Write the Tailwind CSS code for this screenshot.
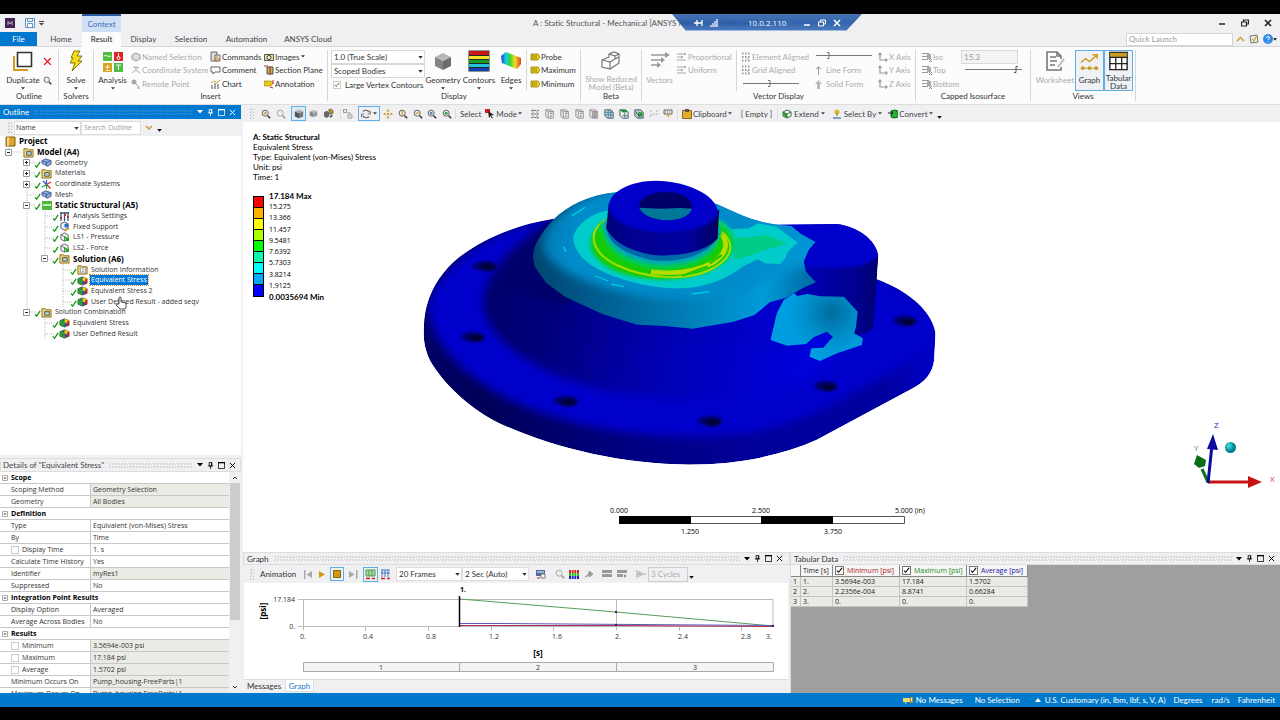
<!DOCTYPE html>
<html lang="en">
<head>
    <meta charset="UTF-8">
    <meta name="viewport" content="width=device-width, initial-scale=1.0">
    <title>A : Static Structural - Mechanical</title>
    <script src="https://cdn.jsdelivr.net/npm/@tailwindcss/browser@4"></script>
    <style>
        body { font-family: Lato, 'Open Sans', sans-serif; }
        .dots {
            background-image: radial-gradient(currentColor 35%, transparent 40%), radial-gradient(currentColor 35%, transparent 40%);
            background-size: 3px 3px;
            background-position: 0 0, 1px 2px;
        }
    </style>
</head>
<body class="flex h-screen flex-col overflow-hidden whitespace-nowrap bg-black text-[8px] leading-[10px] text-[#333]">

    <!-- Shared icons -->
    <svg class="hidden">
        <symbol id="zoom" viewBox="0 0 12 12"><circle cx="5" cy="5" r="3.6" fill="#f2f2f2" stroke="#555" stroke-width="1.1"/><path d="M8 8l3 3" stroke="#333" stroke-width="1.8"/></symbol>
        <symbol id="cube" viewBox="0 0 12 12"><path d="M6 1l5 2-5 2-5-2z" fill="#aaa"/><path d="M1 3l5 2v6L1 9z" fill="#555"/><path d="M11 3L6 5v6l5-2z" fill="#777"/></symbol>
        <symbol id="pick" viewBox="0 0 12 12"><path d="M1 1h6l3 2v8H4L1 9zM1 1l3 2h6M4 3v8" fill="#eee" stroke="#888"/><path d="M6 5h3M7 7v3" stroke="#666"/></symbol>
        <symbol id="part" viewBox="0 0 12 12"><path d="M1 4l4-2 6 2v4l-4 2-4-2-2-1z" fill="#8fa9d6" stroke="#34558f" stroke-width=".9"/><path d="M1 4l5 2 5-2M6 6v4" fill="none" stroke="#34558f" stroke-width=".9"/></symbol>
        <symbol id="folder" viewBox="0 0 12 12"><path d="M1 2h4l1 1h5v8H1z" fill="#efd571" stroke="#8a6b15"/><path d="M4 5h5v4H4z" fill="#b8c8d0" stroke="#4c5a5c"/></symbol>
        <symbol id="result" viewBox="0 0 12 12"><path d="M1 4l5-2 5 2v5l-5 2-5-2z" fill="#2450b8" stroke="#333" stroke-width=".7"/><path d="M1 4l3-1 2 3v5l-5-2z" fill="#2b9b30"/><path d="M6 2l5 2-2 3-3-1z" fill="#efd000"/><path d="M9 5l2-1v5l-3 1z" fill="#d32020"/></symbol>
        <symbol id="load" viewBox="0 0 12 12"><path d="M2 3l4-2 4 2v5l-4 2-4-2z" fill="#e9eef0" stroke="#555" stroke-width=".9"/><path d="M2 3l4 2v5" fill="none" stroke="#555" stroke-width=".8"/><path d="M6 5l4 4m0-3v3H7" stroke="#14a514" stroke-width="1.5" fill="none"/></symbol>
        <symbol id="check" viewBox="0 0 8 8"><path d="M1 5l2 2 4-6" fill="none" stroke="#119911" stroke-width="1.5"/></symbol>
        <symbol id="minus" viewBox="0 0 7 7"><path d="M.5.5h6v6h-6z" fill="#fff" stroke="#999"/><path d="M2 3.500h3" stroke="#222"/></symbol>
        <symbol id="plus" viewBox="0 0 7 7"><path d="M.5.5h6v6h-6z" fill="#fff" stroke="#999"/><path d="M2 3.500h3M3.500 2v3" stroke="#222"/></symbol>
        <symbol id="down" viewBox="0 0 6 4"><path d="M0 0h6L3 3.500z" fill="currentColor"/></symbol>
        <symbol id="pin" viewBox="0 0 8 8"><path d="M2.500.5h3v4h-3zM1 4.500h6M4 5v3" fill="none" stroke="currentColor" stroke-width=".9"/><path d="M4.500.5h1v4h-1z" fill="currentColor"/></symbol>
        <symbol id="max" viewBox="0 0 8 8"><path d="M.5.5h7v7h-7z" fill="none" stroke="currentColor" stroke-width=".9"/><path d="M0 0h8v1.500H0z" fill="currentColor"/></symbol>
        <symbol id="close" viewBox="0 0 8 8"><path d="M1 1l6 6M7 1L1 7" stroke="currentColor" stroke-width="1.100"/></symbol>
        <symbol id="tag" viewBox="0 0 10 8"><path d="M1 1h7l2 3-2 3H1z" fill="#ecd21e" stroke="#8d7b06" stroke-width=".8"/><path d="M2 3h5M2 5h5" stroke="#7a6800" stroke-dasharray="1.500 .6"/></symbol>
        <symbol id="axis" viewBox="0 0 10 10"><path d="M2 1v7h7M.5 3L2 1l1.500 2M7.500 6.500L9 8 7.500 9.500" fill="none" stroke="#999" stroke-width="1.200"/></symbol>
        <symbol id="iso" viewBox="0 0 10 10"><path d="M0 1.500h7M0 4.500h9M0 7.500h6" stroke="#999" stroke-width="1.200"/><path d="M5 2h4v5H5z" fill="#aaa"/><path d="M7 7l3 3m0-3L7 10" stroke="#888"/></symbol>
        <symbol id="vecs" viewBox="0 0 10 8"><path d="M0 1h9M0 4h6M0 7h9M7 0l2 1-2 1M4 3l2 1-2 1" fill="none" stroke="#aaa"/></symbol>
        <symbol id="dotgrid" viewBox="0 0 10 10"><path d="M1 1.500h8M1 5h8M1 8.500h8" stroke="#999" stroke-width="1.800" stroke-dasharray="1.500 1.500"/><path d="M6 6l3 3" stroke="#aaa"/></symbol>
    </svg>

    <!-- Title bar -->
    <header class="relative mt-[14px] flex h-[18px] shrink-0 items-center bg-[#f0f0f2]">
        <svg class="ml-[5px] size-[10px]" viewBox="0 0 10 10"><path d="M0 0h10v10H0z" fill="#432350"/><path d="M3 7V3.500L5 6l2-2.500V7" fill="none" stroke="#d6bfe0" stroke-width=".9"/></svg>
        <button aria-label="Save" class="ml-[10px]"><svg class="size-[10px]" viewBox="0 0 10 10"><path d="M.5.5h9v9h-9zM2.500.5v3h5v-3M2.500 9.500v-4h5v4" fill="#fff" stroke="#5c95c5"/></svg></button>
        <button aria-label="Customize" class="ml-[4px]"><svg class="h-[5px] w-[5px]" viewBox="0 0 5 5"><path d="M0 0h5v1H0zM0 2h5L2.500 4.500z" fill="#444"/></svg></button>
        <div class="ml-[38px] h-full w-[39px] border-t-2 border-[#2a5ca0] bg-[#cfe0f6] pt-[3px] text-center text-[#3c6fc0]">Context</div>
        <h1 class="ml-[412px] text-[#555]">A : Static Structural - Mechanical [ANSYS Mechanical Enterprise]</h1>
        <div class="absolute inset-y-0 right-0 flex items-center gap-[15px] pr-[8px] text-[#222]">
            <button aria-label="Minimize"><svg class="size-[8px]" viewBox="0 0 8 8"><path d="M1 5h6" stroke="currentColor" stroke-width="1.500"/></svg></button>
            <button aria-label="Restore"><svg class="size-[8px]" viewBox="0 0 8 8"><path d="M2.500 3V1h5v4H6M.5 3h5v4h-5z" fill="none" stroke="currentColor" stroke-width="1.200"/></svg></button>
            <button aria-label="Close"><svg class="size-[8px]" viewBox="0 0 8 8"><path d="M1 1l6 6M7 1L1 7" stroke="currentColor" stroke-width="1.700"/></svg></button>
        </div>
        <!-- Remote session bar -->
        <div class="absolute left-[672px] top-0 z-10 h-[17px] w-[190px] text-white">
            <svg class="absolute inset-0 size-full" viewBox="0 0 190 17">
                <defs><linearGradient id="rdp" x2="0" y2="1"><stop stop-color="#3565ad"/><stop offset=".5" stop-color="#1f55a6"/><stop offset="1" stop-color="#3b6db8"/></linearGradient></defs>
                <path d="M0 0h190l-16 17H14z" fill="url(#rdp)" fill-opacity=".9"/><path d="M14 16.500h160" stroke="#9db9df"/>
            </svg>
            <div class="relative flex h-full items-center pl-[21px]">
                <svg class="h-[8px] w-[25px]" viewBox="0 0 25 8"><path d="M1 4h3M4 1v6M4 4h5M9 1v6" fill="none" stroke="#fff" stroke-width="1.300"/><path d="M18 8V6M20 8V4M22 8V2M24 8V0" stroke="#fff" stroke-width="1.200"/></svg>
                <span class="ml-[30px] font-['Open_Sans']">10.0.2.110</span>
                <button aria-label="Minimize session" class="ml-[17px]"><svg class="size-[8px]" viewBox="0 0 8 8"><path d="M1 6h6" stroke="#fff" stroke-width="1.500"/></svg></button>
                <button aria-label="Restore session" class="ml-[7px]"><svg class="size-[8px]" viewBox="0 0 8 8"><path d="M2.500 3V1h5v4H6M.5 3h5v4h-5z" fill="none" stroke="#fff"/></svg></button>
                <button aria-label="Close session" class="ml-[7px]"><svg class="size-[8px]" viewBox="0 0 8 8"><path d="M1 1l6 6M7 1L1 7" stroke="#fff" stroke-width="1.500"/></svg></button>
            </div>
        </div>
    </header>

    <!-- Ribbon tabs -->
    <nav class="flex h-[15px] shrink-0 items-center border-b border-[#d4d4d6] bg-[#f0f0f2] text-[#444]">
        <button class="h-full w-[37px] bg-[#0078ce] text-white">File</button>
        <button class="w-[45px] pl-[3px]">Home</button>
        <button class="h-[15px] w-[39px] bg-[#fcfcfc] text-[#222]">Result</button>
        <button class="w-[45px]">Display</button>
        <button class="w-[50px]">Selection</button>
        <button class="w-[61px]">Automation</button>
        <button class="w-[62px]">ANSYS Cloud</button>
        <div class="ml-auto flex items-center pr-[3px]">
            <input aria-label="Quick Launch" placeholder="Quick Launch" class="h-[13px] w-[107px] border border-[#d5d5d5] bg-white px-[2px] placeholder:text-[#999]">
            <button aria-label="Collapse ribbon" class="ml-[3px]"><svg class="h-[8px] w-[9px]" viewBox="0 0 9 8"><path d="M1 6l3.500-3.500L8 6" fill="none" stroke="#c89b2b" stroke-width="1.400"/></svg></button>
            <button aria-label="Options" class="ml-[4px]"><svg class="size-[10px]" viewBox="0 0 10 10"><path d="M1 2l7-1 1 7-7 1z" fill="#eee" stroke="#777"/><path d="M3 5l2 2 3-6" fill="none" stroke="#cba52d" stroke-width="1.300"/></svg></button>
            <button aria-label="Help" class="ml-[4px] flex items-center"><svg class="size-[10px]" viewBox="0 0 10 10"><circle cx="5" cy="5" r="5" fill="#318be6"/><path d="M3.500 4q0-1.500 1.500-1.500T6.500 4Q6.500 5 5 5.500V6M5 7v1" stroke="#fff" fill="none"/></svg><svg class="h-[3px] w-[4px] text-black"><use href="#down"/></svg></button>
        </div>
    </nav>

    <!-- Ribbon -->
    <section class="flex h-[58px] shrink-0 border-b border-[#ddd] bg-[#fcfcfc] pt-[3px] pb-[3px] text-[#333]">
        <div class="flex w-[59px] flex-col border-r border-[#d6d6d6]">
            <div class="flex h-[41px]">
                <button class="flex w-[41px] flex-col items-center pl-[5px]">
                    <svg class="size-[22px]" viewBox="0 0 22 22"><path d="M2 6v14h14" fill="none" stroke="#d29a20" stroke-width="2"/><path d="M5.500 2.500h14v14h-14z" fill="#fff" stroke="#333" stroke-width="1.600"/></svg>
                    <span class="mt-[3px]">Duplicate</span>
                    <svg class="mt-[2px] h-[3px] w-[4px] shrink-0"><use href="#down"/></svg>
                </button>
                <div class="flex flex-col gap-[10px] pt-[7px] pl-[2px]">
                    <button aria-label="Delete"><svg class="size-[9px] text-red-600"><use href="#close"/></svg></button>
                    <button aria-label="Find"><svg class="size-[9px]"><use href="#zoom"/></svg></button>
                </div>
            </div>
            <div class="text-center">Outline</div>
        </div>
        <div class="flex w-[35px] flex-col border-r border-[#d6d6d6]">
            <button class="flex h-[41px] flex-col items-center">
                <svg class="size-[22px]" viewBox="0 0 22 22"><path d="M9 1h6l-3 5h5l-4 5h4L7 21l3-8H5l3-5H6z" fill="#f5dc13" stroke="#6a5a00" stroke-width=".8"/></svg>
                <span class="mt-[3px]">Solve</span>
                <svg class="mt-[2px] h-[3px] w-[4px] shrink-0"><use href="#down"/></svg>
            </button>
            <div class="text-center">Solvers</div>
        </div>
        <div class="flex w-[234px] flex-col border-r border-[#d6d6d6]">
            <div class="flex h-[41px]">
                <button class="flex w-[37px] flex-col items-center">
                    <svg class="size-[22px]" viewBox="0 0 22 22"><path d="M1 2h9v9H1zM12 13h9v9h-9z" fill="#51bd43"/><path d="M12 2h9v9h-9z" fill="#dd2222"/><path d="M1 13h9v9H1z" fill="#d6a51d"/><path d="M2 6q2-1 3.500 0T9 6M16.500 3v4M14 15h5M16.500 15v5M5.500 15v4M3.500 17h4M3.500 20.500h4" fill="none" stroke="#fff" stroke-width=".9"/><circle cx="16.500" cy="8" r="1.500" fill="none" stroke="#fff"/></svg>
                    <span class="mt-[3px]">Analysis</span>
                    <svg class="mt-[2px] h-[3px] w-[4px] shrink-0"><use href="#down"/></svg>
                </button>
                <div class="grid w-[79px] grid-rows-3 text-[#aaa]">
                    <button class="flex items-center gap-[1px]"><svg class="size-[10px]" viewBox="0 0 10 10"><path d="M1 3l4-2 4 2v4L5 9 1 7z" fill="#ddd" stroke="#999"/></svg>Named Selection</button>
                    <button class="flex items-center gap-[1px]"><svg class="size-[10px]" viewBox="0 0 10 10"><path d="M5 5V1M5 5l4 3M5 5L1 8M2 2l6 1" stroke="#aaa"/></svg>Coordinate System</button>
                    <button class="flex items-center gap-[1px]"><svg class="size-[10px]" viewBox="0 0 10 10"><circle cx="3" cy="3" r="2.500" fill="#aaa"/><path d="M4 4l4 4M6 9h3" stroke="#999"/></svg>Remote Point</button>
                </div>
                <div class="grid w-[54px] grid-rows-3">
                    <button class="flex items-center gap-[1px]"><svg class="size-[11px]" viewBox="0 0 11 11"><path d="M1 1h6v9H1z" fill="#ddd" stroke="#666"/><path d="M5 4h5v6H5z" fill="#eee" stroke="#666"/><path d="M5 10V7M7 10V5M9 10V7" stroke="#b67c18"/></svg>Commands</button>
                    <button class="flex items-center gap-[1px]"><svg class="size-[11px]" viewBox="0 0 11 11"><path d="M1 2h9v5H5L3 9V7H1z" fill="#fff" stroke="#666"/></svg>Comment</button>
                    <button class="flex items-center gap-[1px]"><svg class="size-[11px]" viewBox="0 0 11 11"><path d="M2 10V6M5 10V4M8 10V5" stroke="#888" stroke-width="1.500"/><path d="M1 4l3-2 3 2 3-3" fill="none" stroke="#c9a026"/></svg>Chart</button>
                </div>
                <div class="grid grid-rows-3">
                    <button class="flex items-center gap-[1px]"><svg class="size-[10px]" viewBox="0 0 10 10"><path d="M.5 2.500h9v6h-9z" fill="#efe29a" stroke="#555"/><circle cx="5" cy="5.500" r="2" fill="#fff" stroke="#333"/></svg>Images<svg class="h-[3px] w-[4px]"><use href="#down"/></svg></button>
                    <button class="flex items-center gap-[1px]"><svg class="size-[10px]" viewBox="0 0 10 10"><path d="M3 2h6v7H3z" fill="#b6b258" stroke="#555"/><path d="M0 1h4M6 1v9" stroke="#c22"/></svg>Section Plane</button>
                    <button class="flex items-center gap-[1px]"><svg class="size-[10px]" viewBox="0 0 10 10"><path d="M0 2h7l2 2-2 3H0z" fill="#e8c91e" stroke="#997c00" stroke-width=".6"/><path d="M6 8l3 1M9 1v4" stroke="#c22"/></svg>Annotation</button>
                </div>
            </div>
            <div class="text-center">Insert</div>
        </div>
        <div class="flex w-[253px] flex-col border-r border-[#d6d6d6]">
            <div class="flex h-[41px]">
                <div class="ml-[3px] flex w-[95px] flex-col">
                    <div class="relative"><select aria-label="Result scale" class="block h-[14px] w-[94px] appearance-none border border-[#d8d8d8] bg-white px-[2px]"><option>1.0 (True Scale)</option></select><svg class="pointer-events-none absolute top-[6px] right-[3px] h-[3px] w-[5px]"><use href="#down"/></svg></div>
                    <div class="relative"><select aria-label="Scoping" class="block h-[14px] w-[94px] appearance-none border border-[#d8d8d8] bg-white px-[2px]"><option>Scoped Bodies</option></select><svg class="pointer-events-none absolute top-[6px] right-[3px] h-[3px] w-[5px]"><use href="#down"/></svg></div>
                    <label class="flex h-[14px] items-center gap-[4px] pl-[2px]"><input type="checkbox" checked class="peer sr-only"><svg class="size-[8px] border border-[#ccc] bg-white" viewBox="0 0 8 8"><path d="M1 4l2 2 4-5" fill="none" stroke="#333"/></svg>Large Vertex Contours</label>
                </div>
                <button class="flex w-[34px] flex-col items-center">
                    <svg class="size-[22px]" viewBox="0 0 22 22"><path d="M11 3l8 4-8 4-8-4z" fill="#b7b7b7"/><path d="M3 7l8 4v9l-8-4z" fill="#858585"/><path d="M19 7l-8 4v9l8-4z" fill="#6b6b6b"/></svg>
                    <span class="mt-[3px]">Geometry</span><svg class="mt-[2px] h-[3px] w-[4px] shrink-0"><use href="#down"/></svg>
                </button>
                <button class="ml-[1px] flex w-[36px] flex-col items-center">
                    <svg class="size-[22px]" viewBox="0 0 22 22"><path d="M.5.5h21v21H.5z" fill="#1d2a2a"/><path d="M1 1h20v4H1z" fill="#c81919"/><path d="M1 6h20v3H1z" fill="#f0df22"/><path d="M1 10h20v3H1z" fill="#189b21"/><path d="M1 14h20v3H1z" fill="#23c4da"/><path d="M1 18h20v3H1z" fill="#1740b0"/></svg>
                    <span class="mt-[3px]">Contours</span><svg class="mt-[2px] h-[3px] w-[4px] shrink-0"><use href="#down"/></svg>
                </button>
                <button class="flex w-[28px] flex-col items-center">
                    <svg class="size-[22px]" viewBox="0 0 22 22"><defs><linearGradient id="rainbow"><stop stop-color="#1b34d0"/><stop offset=".25" stop-color="#19d0e8"/><stop offset=".45" stop-color="#38d52f"/><stop offset=".7" stop-color="#f0df22"/><stop offset="1" stop-color="#e03c19"/></linearGradient></defs><path d="M1 6l5-4 15 6v6l-4 5L2 13z" fill="url(#rainbow)"/></svg>
                    <span class="mt-[3px]">Edges</span><svg class="mt-[2px] h-[3px] w-[4px] shrink-0"><use href="#down"/></svg>
                </button>
                <div class="ml-auto grid w-[54px] grid-rows-3 border-l border-[#d6d6d6] pl-[3px]">
                    <button class="flex items-center gap-[1px]"><svg class="h-[8px] w-[10px]"><use href="#tag"/></svg>Probe</button>
                    <button class="flex items-center gap-[1px]"><svg class="h-[8px] w-[10px]"><use href="#tag"/></svg>Maximum</button>
                    <button class="flex items-center gap-[1px]"><svg class="h-[8px] w-[10px]"><use href="#tag"/></svg>Minimum</button>
                </div>
            </div>
            <div class="text-center">Display</div>
        </div>
        <div class="flex w-[61px] flex-col border-r border-[#d6d6d6]">
            <button class="flex h-[41px] flex-col items-center text-[#aaa]">
                <svg class="size-[22px]" viewBox="0 0 22 22"><path d="M2 10l7-3V4l5-2 5 2v9l-9 6-8-2zM2 10l8 2v7M10 12l5-3V6L9 4M15 6l4-2M15 9l4-2" fill="none" stroke="#777" stroke-width="1.200"/></svg>
                <span class="mt-[3px] text-center leading-[8px]"><span class="block">Show Reduced</span><span class="block">Model (Beta)</span></span>
            </button>
            <div class="text-center">Beta</div>
        </div>
        <div class="flex w-[274px] flex-col border-r border-[#d6d6d6]">
            <div class="flex h-[41px] text-[#aaa]">
                <button class="flex w-[35px] flex-col items-center">
                    <svg class="size-[22px]" viewBox="0 0 22 22"><path d="M2 5h15M2 10h11M2 15h7" stroke="#999" stroke-width="1.500"/><path d="M16 2l5 3-5 3zM12 7l4 3-4 3zM8 12l4 3-4 3z" fill="#999"/></svg>
                    <span class="mt-[3px]">Vectors</span>
                </button>
                <div class="grid w-[60px] grid-rows-3 border-r border-[#d6d6d6]">
                    <button class="flex items-center gap-[1px]"><svg class="h-[8px] w-[10px]"><use href="#vecs"/></svg>Proportional</button>
                    <button class="flex items-center gap-[1px]"><svg class="h-[8px] w-[10px]"><use href="#vecs"/></svg>Uniform</button>
                </div>
                <div class="ml-[4px] grid w-[74px] grid-rows-3">
                    <button class="flex items-center gap-[1px]"><svg class="size-[10px]"><use href="#dotgrid"/></svg>Element Aligned</button>
                    <button class="flex items-center gap-[1px]"><svg class="size-[10px]"><use href="#dotgrid"/></svg>Grid Aligned</button>
                    <svg class="h-[12px] w-[60px]" viewBox="0 0 60 12"><path d="M2 6.500h56" stroke="#777"/><path d="M27 3.500h2v6h-2" fill="none" stroke="#777"/></svg>
                </div>
                <div class="grid w-[63px] grid-rows-3">
                    <svg class="h-[12px] w-[60px]" viewBox="0 0 60 12"><path d="M1 5.500h56" stroke="#777"/><path d="M12 2.500h2v6h-2" fill="none" stroke="#777"/></svg>
                    <button class="flex items-center gap-[4px]"><svg class="h-[9px] w-[7px]" viewBox="0 0 7 9"><path d="M3.500 9V1M1 3l2.500-2L6 3" fill="none" stroke="#999"/></svg>Line Form</button>
                    <button class="flex items-center gap-[4px]"><svg class="h-[9px] w-[7px]" viewBox="0 0 7 9"><path d="M3.500 0L7 4H5v5H2V4H0z" fill="#bbb"/></svg>Solid Form</button>
                </div>
                <div class="grid grid-rows-3">
                    <button class="flex items-center gap-[1px]"><svg class="size-[10px]"><use href="#axis"/></svg>X Axis</button>
                    <button class="flex items-center gap-[1px]"><svg class="size-[10px]"><use href="#axis"/></svg>Y Axis</button>
                    <button class="flex items-center gap-[1px]"><svg class="size-[10px]"><use href="#axis"/></svg>Z Axis</button>
                </div>
            </div>
            <div class="text-center">Vector Display</div>
        </div>
        <div class="flex w-[115px] flex-col border-r border-[#d6d6d6]">
            <div class="flex h-[41px] pl-[6px] text-[#aaa]">
                <div class="grid w-[39px] grid-rows-3">
                    <button class="flex items-center gap-[1px]"><svg class="size-[10px]"><use href="#iso"/></svg>Iso</button>
                    <button class="flex items-center gap-[1px]"><svg class="size-[10px]"><use href="#iso"/></svg>Top</button>
                    <button class="flex items-center gap-[1px]"><svg class="size-[10px]"><use href="#iso"/></svg>Bottom</button>
                </div>
                <div>
                    <input aria-label="Isosurface value" value="15.3" disabled class="block h-[14px] w-[57px] border border-[#d8d8d8] bg-[#f3f3f4] px-[2px] text-[#999]">
                    <svg class="ml-[4px] h-[12px] w-[58px]" viewBox="0 0 58 12"><path d="M0 5.500h57" stroke="#777"/><path d="M49 8.500h2v-6h2" fill="none" stroke="#555"/></svg>
                </div>
            </div>
            <div class="text-center">Capped Isosurface</div>
        </div>
        <div class="flex w-[105px] flex-col border-r border-[#d6d6d6]">
            <div class="flex h-[41px]">
                <button class="ml-[4px] flex w-[40px] flex-col items-center text-[#aaa]">
                    <svg class="size-[22px]" viewBox="0 0 22 22"><path d="M17 9V6l-4-4H3v18h14v-3M13 2v4h4M6 7h6M6 11h7M6 15h5" fill="none" stroke="#777" stroke-width="1.600"/><path d="M20 9l-6 8" stroke="#bbb" stroke-width="2"/></svg>
                    <span class="mt-[3px]">Worksheet</span>
                </button>
                <button class="flex w-[29px] flex-col items-center border border-[#5eaee8] bg-[#f0f1f5]">
                    <svg class="size-[21px]" viewBox="0 0 22 22"><path d="M2 12l5-4 4 3 8-7M14 4h5v4" fill="none" stroke="#c89b23" stroke-width="1.500"/><path d="M2 18h18" stroke="#c89b23"/><circle cx="4" cy="18" r="2" fill="#c89b23"/><circle cx="11" cy="18" r="2" fill="#c89b23"/><circle cx="18" cy="18" r="2" fill="#c89b23"/></svg>
                    <span class="mt-[3px]">Graph</span>
                </button>
                <button class="flex w-[29px] flex-col items-center border border-[#5eaee8] bg-[#f0f1f5]">
                    <svg class="size-[21px]" viewBox="0 0 22 22"><path d="M1.500 1.500h19v19h-19z" fill="#fff" stroke="#222" stroke-width="1.500"/><path d="M2 2h18v5H2z" fill="#c89b23"/><path d="M1 7h20M1 14h20M8 7v14M14.500 7v14" stroke="#222" stroke-width="1.400"/></svg>
                    <span class="mt-[3px] leading-[8px]"><span class="block">Tabular</span><span class="block">Data</span></span>
                </button>
            </div>
            <div class="text-center">Views</div>
        </div>
    </section>

    <main class="flex min-h-0 flex-1 bg-[#f0f0f3]">
        <!-- Left column -->
        <aside class="mr-[2px] flex w-[241px] shrink-0 flex-col font-['Open_Sans'] text-[7px]">
            <section class="flex min-h-0 flex-1 flex-col bg-white">
                <div class="flex h-[14px] shrink-0 items-center gap-[4px] bg-[#0078d0] pr-[5px] pl-[3px] text-white">
                    <h2 class="text-[8px] font-[Lato]">Outline</h2>
                    <div class="dots h-[5px] flex-1 text-[#3a9be2]"></div>
                    <svg class="h-[4px] w-[6px]"><use href="#down"/></svg>
                    <button aria-label="Pin"><svg class="size-[7px]"><use href="#pin"/></svg></button>
                    <button aria-label="Maximize"><svg class="size-[7px]"><use href="#max"/></svg></button>
                    <button aria-label="Close"><svg class="size-[7px]"><use href="#close"/></svg></button>
                </div>
                <div class="flex h-[17px] shrink-0 items-center bg-[#f0f0f3] pl-[7px]">
                    <div class="dots h-[11px] w-[5px] text-[#bbb]"></div>
                    <div class="relative ml-[2px]"><select aria-label="Filter by" class="block h-[14px] w-[67px] appearance-none border border-[#ddd] bg-white px-[1px]"><option>Name</option></select><svg class="pointer-events-none absolute top-[6px] right-[2px] h-[3px] w-[5px]"><use href="#down"/></svg></div>
                    <input aria-label="Search Outline" placeholder="Search Outline" class="h-[14px] w-[60px] border border-[#ddd] bg-white px-[2px] placeholder:text-[#999]">
                    <svg class="ml-[4px] h-[6px] w-[8px]" viewBox="0 0 8 6"><path d="M1 1l3 3 3-3" fill="none" stroke="#c89b2b" stroke-width="1.400"/></svg>
                    <svg class="mt-[5px] ml-[4px] h-[3px] w-[5px] text-black"><use href="#down"/></svg>
                </div>
                <div class="relative">
                    <svg class="absolute inset-0 h-[203px] w-full" viewBox="0 0 240 203">
                        <path d="M8.500 10v6M26.500 22v154M26.500 59h10M44.500 75v48M62.500 128v43M44.500 181v22M44.500 80h10M44.500 91h10M44.500 102h10M44.500 112h10M62.500 134h10M62.500 144h10M62.500 155h10M62.500 166h10M44.500 187h10M44.500 198h10M10 16h12M28 27h8M28 37h8M28 48h8M28 69h8M46 123h8M28 176h8" fill="none" stroke="#bbb" stroke-dasharray="1 1"/>
                    </svg>
                    <ul class="relative grid h-[203px] auto-rows-fr">
                        <li class="flex items-center gap-[3px] pl-[5px] text-[8px] font-bold text-black"><svg class="size-[11px]" viewBox="0 0 11 11"><path d="M1 1h9v9H1z" fill="#e0a62b" stroke="#7d5a12"/><path d="M3 1v9" stroke="#fff"/></svg>Project</li>
                        <li class="flex items-center pl-[2px] text-[8px] font-bold text-black"><span class="flex w-[21px] pl-[3px]"><svg class="size-[7px]"><use href="#minus"/></svg></span><svg class="mr-[3px] size-[11px]"><use href="#folder"/></svg>Model (A4)</li>
                        <li class="flex items-center pl-[20px]"><span class="flex w-[14px] pl-[3px]"><svg class="size-[7px]"><use href="#plus"/></svg></span><svg class="mt-[3px] size-[7px]"><use href="#check"/></svg><svg class="mr-[3px] size-[11px]"><use href="#part"/></svg>Geometry</li>
                        <li class="flex items-center pl-[20px]"><span class="flex w-[14px] pl-[3px]"><svg class="size-[7px]"><use href="#plus"/></svg></span><svg class="mt-[3px] size-[7px]"><use href="#check"/></svg><svg class="mr-[3px] size-[11px]"><use href="#folder"/></svg>Materials</li>
                        <li class="flex items-center pl-[20px]"><span class="flex w-[14px] pl-[3px]"><svg class="size-[7px]"><use href="#plus"/></svg></span><svg class="mt-[3px] size-[7px]"><use href="#check"/></svg><svg class="mr-[3px] size-[11px]" viewBox="0 0 11 11"><path d="M5.500 5.500V1M5.500 5.500L2 2" stroke="#2a4fd0" stroke-width="1.200"/><path d="M5.500 5.500L10 3M5.500 5.500l4 4" stroke="#d22" stroke-width="1.200"/><path d="M5.500 5.500L1 8M5.500 5.500V10" stroke="#1a9a4a" stroke-width="1.200"/></svg>Coordinate Systems</li>
                        <li class="flex items-center pl-[34px]"><svg class="mt-[3px] size-[7px]"><use href="#check"/></svg><svg class="mr-[3px] size-[11px]"><use href="#part"/></svg>Mesh</li>
                        <li class="flex items-center pl-[20px] text-[8px] font-bold text-black"><span class="flex w-[14px] pl-[3px]"><svg class="size-[7px]"><use href="#minus"/></svg></span><svg class="mt-[3px] size-[7px]"><use href="#check"/></svg><svg class="mr-[3px] size-[11px]" viewBox="0 0 11 11"><path d="M1 1h10v9H1z" fill="#4db83c"/><path d="M2 5h8M3 4v2M5 4v2M7 4v2M9 4v2" stroke="#e6ffe0"/></svg>Static Structural (A5)</li>
                        <li class="flex items-center pl-[52px]"><svg class="mt-[3px] size-[7px]"><use href="#check"/></svg><svg class="mr-[3px] size-[11px]" viewBox="0 0 11 11"><path d="M2 1v9M5.500 1v9M9 1v9M1 2h9" stroke="#3d5a78" stroke-width="1.300"/><path d="M1 7h2M5 4h2M8 6h2" stroke="#b33" stroke-width="2"/></svg>Analysis Settings</li>
                        <li class="flex items-center pl-[52px]"><svg class="mt-[3px] size-[7px]"><use href="#check"/></svg><svg class="mr-[3px] size-[11px]" viewBox="0 0 12 12"><path d="M2 3l4-2 4 2v5l-4 2-4-2z" fill="#e9eef0" stroke="#345" stroke-width=".9"/><path d="M6 3h4v4H6z" fill="#2468c8"/><path d="M6 11l5-3" stroke="#d8a51c" stroke-width="1.500"/></svg>Fixed Support</li>
                        <li class="flex items-center pl-[52px]"><svg class="mt-[3px] size-[7px]"><use href="#check"/></svg><svg class="mr-[3px] size-[11px]"><use href="#load"/></svg>LS1 - Pressure</li>
                        <li class="flex items-center pl-[52px]"><svg class="mt-[3px] size-[7px]"><use href="#check"/></svg><svg class="mr-[3px] size-[11px]"><use href="#load"/></svg>LS2 - Force</li>
                        <li class="flex items-center pl-[38px] text-[8px] font-bold text-black"><span class="flex w-[14px] pl-[3px]"><svg class="size-[7px]"><use href="#minus"/></svg></span><svg class="mt-[3px] size-[7px]"><use href="#check"/></svg><svg class="mr-[3px] size-[11px]"><use href="#folder"/></svg>Solution (A6)</li>
                        <li class="flex items-center pl-[70px]"><svg class="mt-[3px] size-[7px]"><use href="#check"/></svg><svg class="mr-[3px] size-[11px]" viewBox="0 0 12 12"><path d="M1 2h4l1 1h5v8H1z" fill="#efd571" stroke="#8a6b15"/><path d="M4 4h5v6H4z" fill="#fff" stroke="#998"/><path d="M6.500 5v1M6.500 7v2" stroke="#24c"/></svg>Solution Information</li>
                        <li class="flex items-center pl-[70px]"><svg class="mt-[3px] size-[7px]"><use href="#check"/></svg><svg class="mr-[2px] size-[11px]"><use href="#result"/></svg><span class="bg-[#0078d7] px-[1px] text-white outline-1 outline-dotted outline-[#d98b2e]">Equivalent Stress</span></li>
                        <li class="flex items-center pl-[70px]"><svg class="mt-[3px] size-[7px]"><use href="#check"/></svg><svg class="mr-[3px] size-[11px]"><use href="#result"/></svg>Equivalent Stress 2</li>
                        <li class="flex items-center pl-[70px]"><svg class="mt-[3px] size-[7px]"><use href="#check"/></svg><svg class="mr-[3px] size-[11px]"><use href="#result"/></svg>User Defined Result - added seqv</li>
                        <li class="flex items-center pl-[20px]"><span class="flex w-[14px] pl-[3px]"><svg class="size-[7px]"><use href="#minus"/></svg></span><svg class="mt-[3px] size-[7px]"><use href="#check"/></svg><svg class="mr-[3px] size-[11px]"><use href="#folder"/></svg>Solution Combination</li>
                        <li class="flex items-center pl-[52px]"><svg class="mt-[3px] size-[7px]"><use href="#check"/></svg><svg class="mr-[3px] size-[11px]"><use href="#result"/></svg>Equivalent Stress</li>
                        <li class="flex items-center pl-[52px]"><svg class="mt-[3px] size-[7px]"><use href="#check"/></svg><svg class="mr-[3px] size-[11px]"><use href="#result"/></svg>User Defined Result</li>
                    </ul>
                    <!-- Mouse pointer -->
                    <svg class="absolute top-[160px] left-[115px] h-[14px] w-[12px]" viewBox="0 0 12 14"><path d="M4 8V2q0-1 1-1t1 1v4l5 1v4l-1 2H5L1 9q0-1 1-1z" fill="#fff" stroke="#222" stroke-width=".8"/></svg>
                </div>
            </section>

            <!-- Details -->
            <section class="mt-[3px] flex h-[235px] shrink-0 flex-col">
                <div class="flex h-[14px] shrink-0 items-center gap-[4px] border border-[#ddd] pr-[4px] pl-[2px] text-[#444]">
                    <h2 class="font-[Lato] text-[8px]">Details of "Equivalent Stress"</h2>
                    <div class="dots h-[5px] flex-1 text-[#c4c4c8]"></div>
                    <svg class="h-[4px] w-[6px] text-black"><use href="#down"/></svg>
                    <button aria-label="Pin"><svg class="size-[7px] text-black"><use href="#pin"/></svg></button>
                    <button aria-label="Maximize"><svg class="size-[7px] text-black"><use href="#max"/></svg></button>
                    <button aria-label="Close"><svg class="size-[7px] text-black"><use href="#close"/></svg></button>
                </div>
                <div class="flex min-h-0 flex-1 overflow-hidden">
                    <div class="w-[229px] overflow-hidden">
                        <table class="w-full table-fixed border-separate border-spacing-0 bg-white text-[#333] [&_td]:h-[12px] [&_td]:border-b [&_td]:border-[#c8c8c8] [&_td]:py-0 [&_td]:pl-[2px] [&_td]:leading-[11px] [&_th]:h-[12px] [&_th]:border-b [&_th]:border-[#c8c8c8] [&_th]:py-0 [&_th]:pl-[2px] [&_th]:text-left [&_th]:leading-[11px] [&_th]:text-black">
                            <colgroup><col class="w-[9px]"><col class="w-[81px]"><col></colgroup>
                            <tr><td><svg class="size-[6px]"><use href="#minus"/></svg></td><th colspan="2">Scope</th></tr>
                            <tr><td></td><td>Scoping Method</td><td class="border-l bg-[#ebebe6]">Geometry Selection</td></tr>
                            <tr><td></td><td>Geometry</td><td class="border-l bg-[#ebebe6]">All Bodies</td></tr>
                            <tr><td><svg class="size-[6px]"><use href="#minus"/></svg></td><th colspan="2">Definition</th></tr>
                            <tr><td></td><td>Type</td><td class="border-l">Equivalent (von-Mises) Stress</td></tr>
                            <tr><td></td><td>By</td><td class="border-l">Time</td></tr>
                            <tr><td></td><td><label class="flex items-center gap-[3px]"><input type="checkbox" class="size-[8px] appearance-none border border-[#ccc] bg-white">Display Time</label></td><td class="border-l">1. s</td></tr>
                            <tr><td></td><td>Calculate Time History</td><td class="border-l">Yes</td></tr>
                            <tr><td></td><td>Identifier</td><td class="border-l bg-[#ebebe6]">myRes1</td></tr>
                            <tr><td></td><td>Suppressed</td><td class="border-l">No</td></tr>
                            <tr><td><svg class="size-[6px]"><use href="#minus"/></svg></td><th colspan="2">Integration Point Results</th></tr>
                            <tr><td></td><td>Display Option</td><td class="border-l">Averaged</td></tr>
                            <tr><td></td><td>Average Across Bodies</td><td class="border-l">No</td></tr>
                            <tr><td><svg class="size-[6px]"><use href="#minus"/></svg></td><th colspan="2">Results</th></tr>
                            <tr><td></td><td><label class="flex items-center gap-[3px]"><input type="checkbox" class="size-[8px] appearance-none border border-[#ccc] bg-white">Minimum</label></td><td class="border-l bg-[#ebebe6]">3.5694e-003 psi</td></tr>
                            <tr><td></td><td><label class="flex items-center gap-[3px]"><input type="checkbox" class="size-[8px] appearance-none border border-[#ccc] bg-white">Maximum</label></td><td class="border-l bg-[#ebebe6]">17.184 psi</td></tr>
                            <tr><td></td><td><label class="flex items-center gap-[3px]"><input type="checkbox" class="size-[8px] appearance-none border border-[#ccc] bg-white">Average</label></td><td class="border-l bg-[#ebebe6]">1.5702 psi</td></tr>
                            <tr><td></td><td>Minimum Occurs On</td><td class="border-l bg-[#ebebe6]">Pump_housing-FreeParts|1</td></tr>
                            <tr><td></td><td>Maximum Occurs On</td><td class="border-l bg-[#ebebe6]">Pump_housing-FreeParts|1</td></tr>
                        </table>
                    </div>
                    <div class="flex flex-1 flex-col items-center bg-[#f0f0f0]">
                        <svg class="my-[3px] h-[5px] w-[6px]" viewBox="0 0 6 5"><path d="M1 4l2-2 2 2" fill="none" stroke="#333"/></svg>
                        <div class="h-[137px] w-[10px] bg-[#cdcdcd]"></div>
                        <svg class="mt-auto mb-[3px] h-[5px] w-[6px]" viewBox="0 0 6 5"><path d="M1 1l2 2 2-2" fill="none" stroke="#333"/></svg>
                    </div>
                </div>
            </section>
        </aside>

        <div class="flex min-w-0 flex-1 flex-col">
            <!-- Graphics toolbar -->
            <div class="flex h-[17px] shrink-0 items-center pl-[6px] text-[#444]">
                <div class="dots h-[11px] w-[5px] text-[#bbb]"></div>
                <button aria-label="Zoom in" class="ml-[4px] flex w-[15px] justify-center"><svg class="size-[10px]" viewBox="0 0 12 12"><use href="#zoom"/><path d="M3 5h4M5 3v4" stroke="#b88912"/></svg></button>
                <button aria-label="Zoom out" class="flex w-[15px] justify-center opacity-50"><svg class="size-[10px]" viewBox="0 0 12 12"><use href="#zoom"/></svg></button>
                <button aria-label="Shaded" class="ml-[3px] flex h-[15px] w-[15px] items-center justify-center border border-[#5eaee8] bg-[#dbeaf7]"><svg class="size-[10px]"><use href="#cube"/></svg></button>
                <button aria-label="Wireframe" class="flex w-[15px] justify-center opacity-70"><svg class="size-[9px]"><use href="#cube"/></svg></button>
                <button aria-label="Views" class="flex w-[15px] justify-center"><svg class="size-[11px]" viewBox="0 0 12 12"><path d="M1 5l3-2 3 2v4l-3 2-3-2z" fill="#666"/><path d="M6 2l3-1 2 2v3L8 7z" fill="#b79226" stroke="#444" stroke-width=".6"/><path d="M8 10l2-2" stroke="#333" stroke-width="1.500"/></svg></button>
                <button aria-label="Explode" class="ml-[4px] flex w-[14px] justify-center border-l border-[#ddd]"><svg class="size-[10px]" viewBox="0 0 10 10"><path d="M.5.5h3v3h-3zM5 6h4v3H5zM4 4h4" fill="none" stroke="#999"/></svg></button>
                <button aria-label="Rotate" class="ml-[4px] flex h-[15px] w-[22px] items-center justify-center gap-[2px] border border-[#5eaee8]"><svg class="size-[10px]" viewBox="0 0 10 10"><path d="M2 2.500a4 4 0 0 1 6.500 1M8 7.500a4 4 0 0 1-6.500-1" fill="none" stroke="#666" stroke-width="1.200"/><path d="M9.500 2v3h-3M.5 8V5h3" fill="none" stroke="#666" stroke-width=".8"/></svg><svg class="h-[3px] w-[4px]"><use href="#down"/></svg></button>
                <button aria-label="Pan" class="flex w-[15px] justify-center"><svg class="size-[10px]" viewBox="0 0 10 10"><path d="M5 0l1.500 2.500h-3zM5 10l1.500-2.500h-3zM0 5l2.500-1.500v3zM10 5L7.500 3.500v3z" fill="#c99812"/><path d="M4 4h2v2H4z" fill="#c99812"/></svg></button>
                <button aria-label="Zoom" class="flex w-[15px] justify-center"><svg class="size-[10px]" viewBox="0 0 12 12"><use href="#zoom"/><path d="M5 2v6" stroke="#c99812" stroke-width="1.500"/></svg></button>
                <button aria-label="Box zoom" class="flex w-[15px] justify-center"><svg class="size-[10px]" viewBox="0 0 12 12"><use href="#zoom"/><path d="M3 5h4" stroke="#c99812" stroke-width="1.500"/></svg></button>
                <button aria-label="Fit" class="flex w-[14px] justify-center"><svg class="size-[10px]" viewBox="0 0 12 12"><use href="#zoom"/><circle cx="5" cy="5" r="1.800" fill="#5a86b0"/></svg></button>
                <button aria-label="Fit selection" class="flex w-[15px] justify-center"><svg class="size-[10px]" viewBox="0 0 12 12"><use href="#zoom"/><circle cx="5" cy="5" r="1.800" fill="#23a33a"/></svg></button>
                <span class="ml-[1px] border-l border-[#ddd] pl-[4px]">Select</span>
                <button class="ml-[4px] flex items-center gap-[1px]"><svg class="h-[11px] w-[10px]" viewBox="0 0 10 11"><path d="M0 1h5v4H0z" fill="#d01c1c"/><path d="M3 3l6 4-3 .5L8 10l-1 .5L5.500 8 4 10z" fill="#222"/></svg>Mode<svg class="h-[3px] w-[4px]"><use href="#down"/></svg></button>
                <div class="ml-[6px] flex">
                    <button aria-label="Smart select" class="flex w-[15px] justify-center"><svg class="size-[10px]" viewBox="0 0 10 10"><path d="M1 1.500h8M1 5h8M1 8.500h8" stroke="#777" stroke-dasharray="2 1"/><path d="M3 0v9M7 2v8" stroke="#999"/></svg></button>
                    <button aria-label="Vertex" class="flex w-[15px] justify-center"><svg class="size-[10px]"><use href="#pick"/></svg></button>
                    <button aria-label="Edge" class="flex w-[15px] justify-center"><svg class="size-[10px]"><use href="#pick"/></svg></button>
                    <button aria-label="Face" class="flex w-[14px] justify-center"><svg class="size-[10px]"><use href="#pick"/></svg></button>
                    <button aria-label="Body" class="flex w-[15px] justify-center"><svg class="size-[10px]" viewBox="0 0 12 12"><use href="#pick"/><path d="M4 3h6v8H4z" fill="#888" fill-opacity=".6"/></svg></button>
                    <button aria-label="Node" class="flex w-[15px] justify-center"><svg class="size-[10px]" viewBox="0 0 12 12"><path d="M1 1h7l3 3v7H4L1 8z" fill="#cfe0ef" stroke="#345"/><path d="M1 4h10M1 7h10M5 1v10M8 1v10" stroke="#378"/></svg></button>
                    <button aria-label="Element face" class="flex w-[15px] justify-center"><svg class="size-[10px]" viewBox="0 0 12 12"><path d="M1 1h7l3 3v7H4L1 8z" fill="#e9efe9" stroke="#345"/><path d="M1 1h7l3 3H4z" fill="#1d9a38"/><path d="M4 8h7M7 4v7" stroke="#567"/></svg></button>
                    <button aria-label="Element" class="flex w-[15px] justify-center"><svg class="size-[10px]" viewBox="0 0 12 12"><path d="M1 1h7l3 3v7H4L1 8z" fill="#bcc9c4" stroke="#345"/><path d="M5 4h5v5H5z" fill="#1d9a38"/><path d="M2 3l5 7" stroke="#346"/></svg></button>
                    <button aria-label="Coordinates" class="flex w-[14px] justify-center opacity-40"><svg class="size-[10px]" viewBox="0 0 10 10"><path d="M1 2h2M7 2h2M5 4v2M3 5L1 8M7 5h2" stroke="#555"/></svg></button>
                    <button aria-label="Label" class="flex w-[15px] justify-center"><svg class="size-[10px]" viewBox="0 0 10 10"><path d="M1 1h8v4H1z" fill="#eee" stroke="#666"/><path d="M2 3h6" stroke="#666" stroke-dasharray="1 1"/><path d="M4 5h3L5 9z" fill="#d0a51e"/></svg></button>
                </div>
                <button class="ml-[1px] flex items-center gap-[1px] border-l border-[#ddd] pl-[4px]"><svg class="size-[10px]" viewBox="0 0 10 10"><path d="M.5 1.500h9v8h-9z" fill="#e4ae2c" stroke="#8c6718"/><path d="M3 0h4v3H3z" fill="#555"/></svg>Clipboard<svg class="h-[3px] w-[4px]"><use href="#down"/></svg></button>
                <span class="ml-[9px]">[ Empty ]</span>
                <button class="ml-[5px] flex items-center gap-[2px] border-l border-[#ddd] pl-[4px]"><svg class="size-[10px]" viewBox="0 0 10 10"><path d="M1 3l4-2 4 2v4L5 9 1 7z" fill="#fff" stroke="#366a36"/><path d="M1 3l4 2v4L1 7z" fill="#2ea637"/><path d="M1 3l4 2 4-2M5 5v4" fill="none" stroke="#366a36"/></svg>Extend<svg class="h-[3px] w-[4px]"><use href="#down"/></svg></button>
                <button class="ml-[7px] flex items-center gap-[2px]"><svg class="size-[10px]" viewBox="0 0 10 10"><circle cx="5" cy="3" r="2.500" fill="#e2b32c"/><path d="M5 4v3" stroke="#8c6718"/><path d="M1 9h8" stroke="#5a86b0" stroke-width="1.500"/></svg>Select By<svg class="h-[3px] w-[4px]"><use href="#down"/></svg></button>
                <button class="ml-[6px] flex items-center gap-[1px]"><svg class="size-[10px]" viewBox="0 0 10 10"><path d="M3 2l4-1 3 1v6L6 9 3 8z" fill="#1db52c" stroke="#145c1b"/><path d="M0 4h4M3 2l2 2-2 2" stroke="#222" fill="none"/></svg>Convert<svg class="h-[3px] w-[4px]"><use href="#down"/></svg></button>
                <svg class="mt-[7px] ml-[4px] h-[3px] w-[5px] text-black"><use href="#down"/></svg>
            </div>

            <!-- Viewport -->
            <section class="relative min-h-0 flex-1 overflow-hidden bg-white text-black">
                <svg class="absolute top-[38px] left-[167px] h-[320px] w-[540px]" viewBox="0 0 1568 960" preserveAspectRatio="none">
                    <defs>
                        <filter id="b6" x="-20%" y="-20%" width="140%" height="140%"><feGaussianBlur stdDeviation="5"/></filter>
                        <filter id="b14" x="-20%" y="-20%" width="140%" height="140%"><feGaussianBlur stdDeviation="14"/></filter>
                        <linearGradient id="side"><stop stop-color="#000068"/><stop offset=".12" stop-color="#000058"/><stop offset=".4" stop-color="#000080"/><stop offset=".65" stop-color="#00009a"/><stop offset=".9" stop-color="#0000a0"/><stop offset="1" stop-color="#0000c8"/></linearGradient>
                        <linearGradient id="cone" x1="210" y1="380" x2="1150" y2="600" gradientUnits="userSpaceOnUse"><stop stop-color="#000068"/><stop offset=".25" stop-color="#000080"/><stop offset=".55" stop-color="#0000b0"/><stop offset="1" stop-color="#0000da"/></linearGradient>
                        <linearGradient id="cap" x1="370" y1="200" x2="1150" y2="330" gradientUnits="userSpaceOnUse"><stop stop-color="#0079b0"/><stop offset=".15" stop-color="#008ccb"/><stop offset=".8" stop-color="#008ccb"/><stop offset="1" stop-color="#0096d4"/></linearGradient>
                        <linearGradient id="capside" x1="360" y1="300" x2="1150" y2="380" gradientUnits="userSpaceOnUse"><stop stop-color="#004670"/><stop offset=".25" stop-color="#005c90"/><stop offset=".6" stop-color="#0080b8"/><stop offset=".85" stop-color="#009bda"/><stop offset="1" stop-color="#0070a8"/></linearGradient>
                        <linearGradient id="neck"><stop stop-color="#000078"/><stop offset=".2" stop-color="#000090"/><stop offset=".7" stop-color="#0000a0"/><stop offset="1" stop-color="#000060"/></linearGradient>
                        <linearGradient id="boss" x1="1150" y1="0" x2="1360" y2="0" gradientUnits="userSpaceOnUse"><stop stop-color="#0000b0"/><stop offset=".7" stop-color="#000090"/><stop offset="1" stop-color="#000070"/></linearGradient>
                        <radialGradient id="patch" cx="1225" cy="460" r="130" gradientUnits="userSpaceOnUse"><stop stop-color="#006c9c"/><stop offset=".6" stop-color="#0090cc"/><stop offset="1" stop-color="#009ee0"/></radialGradient>
                        <clipPath id="flange"><path id="body" d="M40 500C42 440 60 385 100 335 150 270 270 200 415 177L900 150 1355 358C1430 385 1515 445 1526 520L1522 600C1518 640 1495 665 1460 685L1180 840C1080 885 960 914 810 914 600 912 400 858 250 785 160 735 95 665 60 605 42 570 38 535 40 500z"/></clipPath>
                        <clipPath id="bossclip"><path id="bossbody" d="M1060 194L1240 192C1300 200 1355 240 1360 290L1355 365 1345 505C1320 530 1280 530 1230 525L1060 420z"/></clipPath>
                        <clipPath id="capclip"><path id="captop" d="M600 97C520 105 460 135 415 180 380 220 358 255 357 290L362 320 395 368 450 410 560 463 660 494 740 498 820 506 940 485 1000 465 1045 427 1090 414 1140 385 1178 367 1150 335 1143 305 1157 270 1177 246 1135 222 1107 198C1060 196 1000 185 950 160L890 132z"/></clipPath>
                        <clipPath id="neckclip"><path id="necktop" d="M577 140C577 95 640 62 715 62 800 64 885 100 895 155 890 195 820 220 740 220 650 215 580 190 577 140z"/></clipPath>
                    </defs>
                    <g clip-path="url(#flange)">
                        <use href="#body" fill="url(#side)"/>
                        <path d="M52 440C60 370 180 210 415 172L900 150 1360 355C1440 385 1510 445 1522 515 1520 555 1490 580 1440 610L1250 720C1130 790 1000 832 820 830 600 828 420 785 280 715 180 660 60 560 52 440z" fill="#0000cc" filter="url(#b14)"/>
                        <path d="M420 170C330 230 215 320 213 430 216 520 320 610 480 665 620 712 800 735 960 715 1120 690 1200 650 1240 560L1300 300z" fill="url(#cone)" filter="url(#b14)"/>
                        <path d="M415 180C370 220 300 290 255 370L440 440 600 300z" fill="#00006c" filter="url(#b6)"/>
                    </g>
                    <!-- Right boss -->
                    <g clip-path="url(#bossclip)">
                        <use href="#bossbody" fill="url(#boss)"/>
                        <path d="M1050 170L1260 170C1320 190 1370 240 1362 285 1330 322 1280 328 1150 320z" fill="#0000cc" filter="url(#b6)"/>
                        <path d="M1040 400L1150 400 1260 560 1060 520z" fill="#0000c0" filter="url(#b14)"/>
                    </g>
                    <path d="M1115 400L1125 408 1155 402 1190 409 1260 410 1300 455 1295 500 1290 520 1315 535 1312 555 1240 580 1190 603 1160 590 1165 565 1200 563 1228 530 1210 515 1172 532 1150 552 1095 557 1047 540 1065 460 1085 420z" fill="url(#patch)"/>
                    <!-- Dome cap -->
                    <use href="#captop" fill="url(#capside)"/>
                    <g clip-path="url(#capclip)">
                        <path d="M600 85C480 110 385 190 385 260 400 330 560 395 700 412 850 430 980 400 1060 350 1100 320 1200 330 1200 245L1110 180 890 110z" fill="url(#cap)" filter="url(#b14)"/>
                    </g>
                    <path d="M470 168l38-26M445 260l8 15M538 348l38 15M585 372l35 8M820 402l50-7" stroke="#00cfe0" stroke-width="4"/>
                    <path d="M575 152C520 160 478 200 474 235 478 285 520 320 590 348 660 375 720 385 790 385 870 380 930 350 965 320L1010 298 1030 310 1075 312 1090 295 1097 275 1125 248 1065 200 1010 190 985 205 930 208 895 180z" fill="#00cccc"/>
                    <path d="M930 235l50-4 55-6 35 14 28 12-65 18-60 22-30 10z" fill="#00cc88"/>
                    <ellipse cx="733" cy="250" rx="215" ry="112" fill="#00cc80" filter="url(#b6)"/>
                    <ellipse cx="732" cy="252" rx="203" ry="104" fill="#16cc00" filter="url(#b6)"/>
                    <path d="M565 180C510 220 530 280 600 315 680 355 800 365 870 330 940 295 945 250 905 215" fill="none" stroke="#a4dc00" stroke-width="6"/>
                    <path d="M700 335C780 345 840 330 880 308 920 280 925 250 905 222" fill="none" stroke="#b8dc00" stroke-width="14"/>
                    <path d="M790 348q50-20 75-28M870 310l35-25" fill="none" stroke="#20c800" stroke-width="7"/>
                    <path d="M552 185C550 270 620 325 733 328 840 325 900 290 905 200z" fill="#00cc50" filter="url(#b6)"/>
                    <path d="M562 185C556 260 640 312 733 314 830 312 895 280 902 200z" fill="#00a8b8" filter="url(#b6)"/>
                    <path d="M570 190C568 250 620 280 700 300 790 312 880 280 897 220z" fill="#0068a8"/>
                    <!-- Neck -->
                    <path d="M577 130L570 205C590 245 630 270 700 284 760 292 860 280 893 235L898 150z" fill="url(#neck)"/>
                    <use href="#necktop" fill="#0000ca"/>
                    <g clip-path="url(#neckclip)"><path d="M574 145C585 195 660 224 740 224 820 222 880 200 900 160" fill="none" stroke="#0000a0" stroke-width="14" filter="url(#b6)"/></g>
                    <ellipse cx="742" cy="138" rx="77" ry="42" fill="#000068"/>
                    <path d="M665 143l60 3 60-2 34 2C812 168 785 180 745 181 705 178 675 165 665 143z" fill="#00789a"/>
                    <!-- Bolt holes -->
                    <g fill="#000068" filter="url(#b6)">
                        <ellipse cx="216" cy="318" rx="34" ry="14"/><ellipse cx="182" cy="531" rx="34" ry="14"/><ellipse cx="452" cy="723" rx="36" ry="14"/><ellipse cx="872" cy="783" rx="36" ry="14"/><ellipse cx="1208" cy="678" rx="34" ry="14"/><ellipse cx="1438" cy="482" rx="34" ry="14"/>
                    </g>
                    <g fill="#000034" filter="url(#b6)">
                        <ellipse cx="228" cy="321" rx="20" ry="10"/><ellipse cx="194" cy="534" rx="20" ry="10"/><ellipse cx="461" cy="727" rx="20" ry="10"/><ellipse cx="879" cy="788" rx="20" ry="10"/><ellipse cx="1216" cy="682" rx="20" ry="10"/><ellipse cx="1446" cy="486" rx="20" ry="10"/>
                    </g>
                </svg>

                <div class="absolute top-[10px] left-[10px]">
                    <div class="font-bold">A: Static Structural</div>
                    <div>Equivalent Stress</div>
                    <div>Type: Equivalent (von-Mises) Stress</div>
                    <div>Unit: psi</div>
                    <div>Time: 1</div>
                </div>
                <div class="absolute top-[69px] left-[10px] flex h-[111px] gap-[5px]">
                    <div class="my-[5px] grid w-[11px] auto-rows-fr divide-y divide-black border border-black">
                        <span class="bg-[#ff0000]"></span><span class="bg-[#ffb000]"></span><span class="bg-[#ffff00]"></span><span class="bg-[#aaff00]"></span><span class="bg-[#00ff00]"></span><span class="bg-[#00ffaa]"></span><span class="bg-[#00ffff]"></span><span class="bg-[#00aaff]"></span><span class="bg-[#0000ff]"></span>
                    </div>
                    <div class="flex flex-col justify-between font-['Open_Sans'] text-[7px]">
                        <b class="font-[Lato] text-[8px]">17.184 Max</b><span>15.275</span><span>13.366</span><span>11.457</span><span>9.5481</span><span>7.6392</span><span>5.7303</span><span>3.8214</span><span>1.9125</span><b class="font-[Lato] text-[8px]">0.0035694 Min</b>
                    </div>
                </div>

                <!-- Scale ruler -->
                <svg class="absolute top-[382px] left-[360px] h-[34px] w-[330px]" viewBox="0 0 330 34" font-family="Open Sans" font-size="7">
                    <path d="M16.500 12.500h285v7h-285z" fill="#fff" stroke="#555"/><path d="M16 12h72v8H16zM158 12h72v8h-72z"/>
                    <g text-anchor="middle"><text x="16" y="9">0.000</text><text x="158" y="9">2.500</text><text x="87" y="30">1.250</text><text x="230" y="30">3.750</text></g><text x="292" y="9">5.000 (in)</text>
                </svg>

                <!-- Triad -->
                <svg class="absolute top-[296px] right-[3px] h-[72px] w-[90px]" viewBox="1187 418 90 72" font-size="8" font-family="Open Sans">
                    <defs><radialGradient id="ball" cx=".35" cy=".35"><stop stop-color="#40e8e8"/><stop offset="1" stop-color="#007f8c"/></radialGradient></defs>
                    <path d="M1208 482l-6-13" stroke="#0a6e18" stroke-width="3"/><path d="M1194 464l3-9 9 5-1 6-6 2z" fill="#0a6e18"/>
                    <path d="M1208 482h40" stroke="#c41414" stroke-width="3"/><path d="M1248 476l14 6-14 6z" fill="#c41414"/>
                    <path d="M1208 483l4-38" stroke="#0c0ca0" stroke-width="3"/><path d="M1207 449l6-15 5 16z" fill="#0c0ca0"/>
                    <circle cx="1230.500" cy="447.500" r="5.500" fill="url(#ball)"/>
                    <text x="1214" y="428" fill="#1c1cae">Z</text><text x="1194" y="451" fill="#2c8c3c">Y</text><text x="1270" y="482" fill="#c83c3c">X</text>
                </svg>
            </section>

            <!-- Bottom panels -->
            <div class="flex h-[141px] shrink-0">
                <section class="flex w-[547px] shrink-0 flex-col">
                    <div class="flex h-[13px] shrink-0 items-center gap-[4px] border border-[#ddd] pr-[6px] pl-[3px]">
                        <h2>Graph</h2>
                        <div class="dots h-[5px] flex-1 text-[#c4c4c8]"></div>
                        <svg class="h-[4px] w-[6px] text-black"><use href="#down"/></svg>
                        <button aria-label="Pin"><svg class="size-[7px] text-black"><use href="#pin"/></svg></button>
                        <button aria-label="Maximize"><svg class="size-[7px] text-black"><use href="#max"/></svg></button>
                        <button aria-label="Close"><svg class="size-[7px] text-black"><use href="#close"/></svg></button>
                    </div>
                    <div class="flex h-[18px] shrink-0 items-center pl-[6px]">
                        <div class="dots h-[11px] w-[5px] text-[#bbb]"></div>
                        <span class="ml-[6px] w-[43px]">Animation</span>
                        <button aria-label="First"><svg class="h-[9px] w-[10px]" viewBox="0 0 10 9"><path d="M1 0h1.500v9H1zM9 1v7L3.500 4.500z" fill="#aaa"/></svg></button>
                        <button aria-label="Play" class="ml-[5px]"><svg class="h-[9px] w-[8px]" viewBox="0 0 8 9"><path d="M1 1l6 3.500L1 8z" fill="#cf9a12"/></svg></button>
                        <button aria-label="Stop" class="ml-[4px] flex size-[14px] items-center justify-center border border-[#5eaee8]"><svg class="size-[8px]" viewBox="0 0 8 8"><path d="M.5.5h7v7h-7z" fill="#cf9a12" stroke="#8a6512"/></svg></button>
                        <button aria-label="Last" class="ml-[4px]"><svg class="h-[9px] w-[10px]" viewBox="0 0 10 9"><path d="M8 0h1.500v9H8zM1 1v7l5.500-3.500z" fill="#aaa"/></svg></button>
                        <button aria-label="Distributed" class="ml-[5px] flex size-[15px] items-center justify-center border border-[#5eaee8]"><svg class="size-[11px]" viewBox="0 0 11 11"><path d="M1 1h9v6H1z" fill="#a9dca4" stroke="#4a9a50"/><path d="M4 1v6M7 1v6" stroke="#4a9a50"/><path d="M1 9.500h4M7 9.500h3" stroke="#c22" stroke-width="1.500"/></svg></button>
                        <button aria-label="Result sets" class="ml-[2px]"><svg class="size-[11px]" viewBox="0 0 11 11"><path d="M2 1v7M5 1v7M8 1v7M1 1h9M1 4h9" stroke="#3c79b5"/><path d="M1 9.500h4M7 9.500h3" stroke="#c22" stroke-width="1.500"/></svg></button>
                        <div class="relative ml-[5px]"><select aria-label="Frames" class="block h-[14px] w-[66px] appearance-none border border-[#ddd] bg-white px-[2px]"><option>20 Frames</option></select><svg class="pointer-events-none absolute top-[6px] right-[2px] h-[3px] w-[5px]"><use href="#down"/></svg></div>
                        <div class="relative"><select aria-label="Duration" class="block h-[14px] w-[67px] appearance-none border border-[#ddd] bg-white px-[2px]"><option>2 Sec (Auto)</option></select><svg class="pointer-events-none absolute top-[6px] right-[2px] h-[3px] w-[5px]"><use href="#down"/></svg></div>
                        <button aria-label="Export video" class="ml-[7px]"><svg class="size-[10px]" viewBox="0 0 10 10"><path d="M0 1h9v6H0z" fill="#4a6a9c"/><path d="M1 3h7" stroke="#fff"/><path d="M5 5h4v4H5z" fill="#fff" stroke="#777"/><path d="M1 9h3" stroke="#b33"/></svg></button>
                        <button aria-label="Zoom to fit" class="ml-[9px] opacity-50"><svg class="size-[10px]" viewBox="0 0 12 12"><use href="#zoom"/></svg></button>
                        <button aria-label="Contour colors" class="ml-[4px]"><svg class="size-[10px]" viewBox="0 0 10 10"><path d="M0 1h10v3H0z" fill="#d22"/><path d="M0 4h10v3H0z" fill="#2b2"/><path d="M0 7h10v3H0z" fill="#22c"/><path d="M2.500 0v10M5 0v10M7.500 0v10" stroke="#fff" stroke-width=".7"/></svg></button>
                        <button aria-label="Update" class="ml-[5px]"><svg class="size-[10px]" viewBox="0 0 10 10"><path d="M1 8q4-1 4-4M5 2l4 3-4 3z" fill="#999" stroke="#999"/></svg></button>
                        <button aria-label="Snap" class="ml-[8px]"><svg class="h-[8px] w-[10px]" viewBox="0 0 10 8"><path d="M0 0h10v3H0zM0 4h10v3H0z" fill="#999"/></svg></button>
                        <button aria-label="Frames list" class="ml-[5px]"><svg class="h-[8px] w-[10px]" viewBox="0 0 10 8"><path d="M0 0h10v3H0zM0 4h6v3H0zM7 4l3 2-3 2z" fill="#999"/></svg></button>
                        <button aria-label="Cycles" class="ml-[9px]"><svg class="h-[8px] w-[10px]" viewBox="0 0 10 8"><path d="M1 0v8M1 4h9M3 1v6M5 2v4" stroke="#aaa"/></svg></button>
                        <input aria-label="Cycles" value="3 Cycles" disabled class="ml-[2px] h-[15px] w-[40px] border border-[#ccc] px-[2px] text-[#aaa]">
                        <svg class="mt-[6px] ml-[1px] h-[3px] w-[5px] text-black"><use href="#down"/></svg>
                    </div>
                    <div class="ml-[1px] mr-[2px] min-h-0 flex-1 border-b border-[#ddd] bg-white">
                        <svg class="h-[97px] w-[545px]" viewBox="244 583 545 97" font-size="8" font-family="Open Sans" fill="#333">
                            <g fill="none" stroke="#bbb">
                                <path d="M298 599.500h475v27H298M303.500 599v31M616.500 599v31M365.500 627v4M428.500 627v4M491.500 627v4M553.500 627v4M679.500 627v4M741.500 627v4"/>
                            </g>
                            <path d="M460 599l156 13 157 14" fill="none" stroke="#5a9c5a"/>
                            <path d="M460 623.500h39l274 2" fill="none" stroke="#5a5ac0"/>
                            <path d="M460 625.500h156l157 1" fill="none" stroke="#a83050"/>
                            <path d="M459.500 596v31" stroke="#000" stroke-width="1.500"/>
                            <path d="M615 611h2v2h-2zM615 624h2v2h-2zM772 625h2v2h-2z" fill="#222266"/>
                            <text x="460" y="592" font-size="7" font-weight="bold" fill="#000">1.</text>
                            <g text-anchor="end" font-size="7"><text x="295" y="602">17.184</text><text x="295" y="629">0.</text></g>
                            <g text-anchor="middle" font-size="7"><text x="303" y="639">0.</text><text x="368" y="639">0.4</text><text x="431" y="639">0.8</text><text x="494" y="639">1.2</text><text x="557" y="639">1.6</text><text x="618" y="639">2.</text><text x="683" y="639">2.4</text><text x="746" y="639">2.8</text><text x="769" y="639">3.</text></g>
                            <text x="538" y="656" text-anchor="middle" font-weight="bold" fill="#000">[s]</text>
                            <text transform="translate(266 611) rotate(-90)" text-anchor="middle" font-weight="bold" fill="#000">[psi]</text>
                            <path d="M303.500 662.500h470v9h-470zM459.500 662v9M616.500 662v9" fill="#f4f4f4" stroke="#aaa"/>
                            <g text-anchor="middle" font-size="7"><text x="381" y="670">1</text><text x="538" y="670">2</text><text x="695" y="670">3</text></g>
                        </svg>
                    </div>
                    <div class="flex h-[13px] shrink-0 items-start">
                        <button class="h-[12px] w-[42px]">Messages</button>
                        <button class="h-[12px] w-[29px] border border-t-0 border-[#ddd] bg-white text-[#1a78c8]">Graph</button>
                    </div>
                </section>
                <section class="flex min-w-0 flex-1 flex-col border-l border-[#ddd] bg-[#9f9f9f]">
                    <div class="flex h-[13px] shrink-0 items-center gap-[4px] border-y border-[#ddd] bg-[#f0f0f3] pr-[5px] pl-[3px]">
                        <h2>Tabular Data</h2>
                        <div class="dots h-[5px] flex-1 text-[#c4c4c8]"></div>
                        <svg class="h-[4px] w-[6px] text-black"><use href="#down"/></svg>
                        <button aria-label="Pin"><svg class="size-[7px] text-black"><use href="#pin"/></svg></button>
                        <button aria-label="Maximize"><svg class="size-[7px] text-black"><use href="#max"/></svg></button>
                        <button aria-label="Close"><svg class="size-[7px] text-black"><use href="#close"/></svg></button>
                    </div>
                    <table class="w-[237px] table-fixed border-separate border-spacing-0 bg-[#ebebe6] font-['Open_Sans'] text-[7px] text-[#222] [&_td]:h-[10px] [&_td]:border-r [&_td]:border-b [&_td]:border-[#c4c4c0] [&_td]:py-0 [&_td]:pl-[2px] [&_td]:leading-[9px] [&_th]:h-[12px] [&_th]:border-r [&_th]:border-b [&_th]:border-[#888] [&_th]:bg-[#f6f6f6] [&_th]:p-0 [&_th]:text-left [&_th]:font-normal [&_th]:leading-[11px]">
                        <colgroup><col class="w-[10px]"><col class="w-[32px]"><col class="w-[67px]"><col class="w-[67px]"><col></colgroup>
                        <tr>
                            <th></th><th><span class="pl-[2px]">Time [s]</span></th>
                            <th><label class="flex items-center gap-[3px] pl-[2px] text-[#b02020]"><input type="checkbox" checked class="sr-only"><svg class="size-[9px] border border-[#777] bg-white" viewBox="0 0 8 8"><path d="M1 4l2 2 4-5" fill="none" stroke="#000" stroke-width="1.200"/></svg>Minimum [psi]</label></th>
                            <th><label class="flex items-center gap-[3px] pl-[2px] text-[#208a20]"><input type="checkbox" checked class="sr-only"><svg class="size-[9px] border border-[#777] bg-white" viewBox="0 0 8 8"><path d="M1 4l2 2 4-5" fill="none" stroke="#000" stroke-width="1.200"/></svg>Maximum [psi]</label></th>
                            <th><label class="flex items-center gap-[3px] pl-[2px] text-[#2020a0]"><input type="checkbox" checked class="sr-only"><svg class="size-[9px] border border-[#777] bg-white" viewBox="0 0 8 8"><path d="M1 4l2 2 4-5" fill="none" stroke="#000" stroke-width="1.200"/></svg>Average [psi]</label></th>
                        </tr>
                        <tr><td>1</td><td>1.</td><td>3.5694e-003</td><td>17.184</td><td>1.5702</td></tr>
                        <tr><td>2</td><td>2.</td><td>2.2356e-004</td><td>8.8741</td><td>0.66284</td></tr>
                        <tr><td>3</td><td>3.</td><td>0.</td><td>0.</td><td>0.</td></tr>
                    </table>
                </section>
            </div>
        </div>
    </main>

    <!-- Status bar -->
    <footer class="mb-[13px] flex h-[14px] shrink-0 items-center justify-end bg-[#007acc] pr-[5px] text-white">
        <svg class="h-[9px] w-[11px]" viewBox="0 0 11 9"><path d="M0 2h8v4H4L2 8V6H0z" fill="#f3d36b"/><path d="M7 1h3v6H7z" fill="#b98a20"/><path d="M8.500 2v3" stroke="#fff"/></svg>
        <span class="ml-[2px]">No Messages</span>
        <span class="ml-[12px]">No Selection</span>
        <svg class="ml-[15px] h-[4px] w-[6px]" viewBox="0 0 6 4"><path d="M0 4h6L3 0z" fill="#fff"/></svg>
        <span class="ml-[4px]">U.S. Customary (in, lbm, lbf, s, V, A)</span>
        <span class="ml-[8px]">Degrees</span>
        <span class="ml-[9px]">rad/s</span>
        <span class="ml-[8px]">Fahrenheit</span>
    </footer>
</body>
</html>
